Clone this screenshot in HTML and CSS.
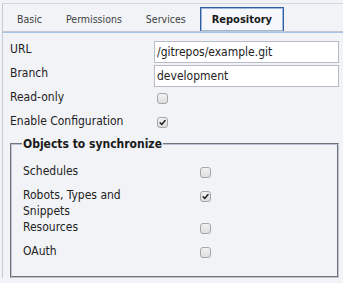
FILE: index.html
```html
<!DOCTYPE html>
<html lang="en">
<head>
    <meta charset="UTF-8">
    <title>Repository settings</title>
    <link rel="stylesheet" href="styles.css">
</head>
<body>
    <div class="panel">
        <div class="tabs">
            <span class="tab">Basic</span>
            <span class="tab">Permissions</span>
            <span class="tab">Services</span>
            <span class="tab active">Repository</span>
        </div>

        <div class="content">
            <div class="row">
                <label>URL</label>
                <input class="text-field" type="text" value="/gitrepos/example.git">
            </div>
            <div class="row">
                <label>Branch</label>
                <input class="text-field" type="text" value="development">
            </div>
            <div class="row">
                <label>Read-only</label>
                <span class="checkbox"></span>
            </div>
            <div class="row">
                <label>Enable Configuration</label>
                <span class="checkbox checked">
                    <svg width="11" height="11" viewBox="0 0 11 11"><path d="M2.6 5.8 L4.6 8 L8.6 3" fill="none" stroke="#222" stroke-width="1.8" stroke-linecap="round" stroke-linejoin="round"/></svg>
                </span>
            </div>

            <fieldset class="sync">
                <legend>Objects to synchronize</legend>
                <div class="sync-row">
                    <label>Schedules</label>
                    <span class="checkbox"></span>
                </div>
                <div class="sync-row">
                    <label>Robots, Types and Snippets</label>
                    <span class="checkbox checked">
                        <svg width="11" height="11" viewBox="0 0 11 11"><path d="M2.6 5.8 L4.6 8 L8.6 3" fill="none" stroke="#222" stroke-width="1.8" stroke-linecap="round" stroke-linejoin="round"/></svg>
                    </span>
                </div>
                <div class="sync-row">
                    <label>Resources</label>
                    <span class="checkbox"></span>
                </div>
                <div class="sync-row">
                    <label>OAuth</label>
                    <span class="checkbox"></span>
                </div>
            </fieldset>
        </div>
    </div>
</body>
</html>
```
FILE: styles.css
```css
body {
    font-family: 'DejaVu Sans Condensed', 'DejaVu Sans', sans-serif;
    font-size: 12px;
    background-color: #f2f3f7;
    color: #222;
    margin: 0;
    padding: 3px 0 0 2px;
}

.panel {
    border-top: 1px solid #d5d7df;
    border-left: 1px solid #c6c9d3;
}

.tabs {
    display: flex;
    align-items: flex-end;
    height: 27px;
    padding-left: 2px;
    border-bottom: 1px solid #c2c6d2;
}

.tab {
    font-size: 10.5px;
    color: #404040;
    height: 23px;
    line-height: 22px;
    padding: 0 11px;
    border: 1px solid transparent;
    border-bottom: none;
}

.tab.active {
    font-size: 11px;
    font-weight: bold;
    color: #1a1a1a;
    line-height: 24px;
    background-color: #f6f7fa;
    border-color: #2f5f9e;
    box-shadow: inset 0 0 0 1px #9db7dc;
    margin-left: 2px;
}

.content {
    border-top: 1px solid #a9c3e8;
    padding: 8px 4px 0 7px;
}

.row {
    display: grid;
    grid-template-columns: 144px 1fr;
    height: 24px;
    line-height: 16px;
}

.text-field {
    font-family: inherit;
    font-size: 12px;
    color: #222;
    height: 22px;
    box-sizing: border-box;
    border: 1px solid #b9bcc4;
    background-color: #fff;
    padding: 0 2px;
    margin: 0;
    outline: none;
}

.checkbox {
    width: 11px;
    height: 11px;
    box-sizing: border-box;
    border: 1px solid #a4a6ac;
    border-radius: 3px;
    background: linear-gradient(#f1f1f1, #dedede);
    margin: 4px 0 0 3px;
    display: flex;
    align-items: center;
    justify-content: center;
}

.checkbox svg {
    width: 9px;
    height: 9px;
}

.sync {
    margin: 0;
    border: 2px groove #bcc2d1;
    padding: 12px 10px 9px 11px;
}

.sync legend {
    font-weight: bold;
    line-height: 14px;
    color: #1a1a1a;
    padding: 0 1px;
    margin-left: -1px;
}

.sync-row {
    display: grid;
    grid-template-columns: 177px 1fr;
    min-height: 24px;
    line-height: 16px;
}

.sync-row label {
    max-width: 115px;
}

.sync-row .checkbox {
    margin-left: 0;
}
```
